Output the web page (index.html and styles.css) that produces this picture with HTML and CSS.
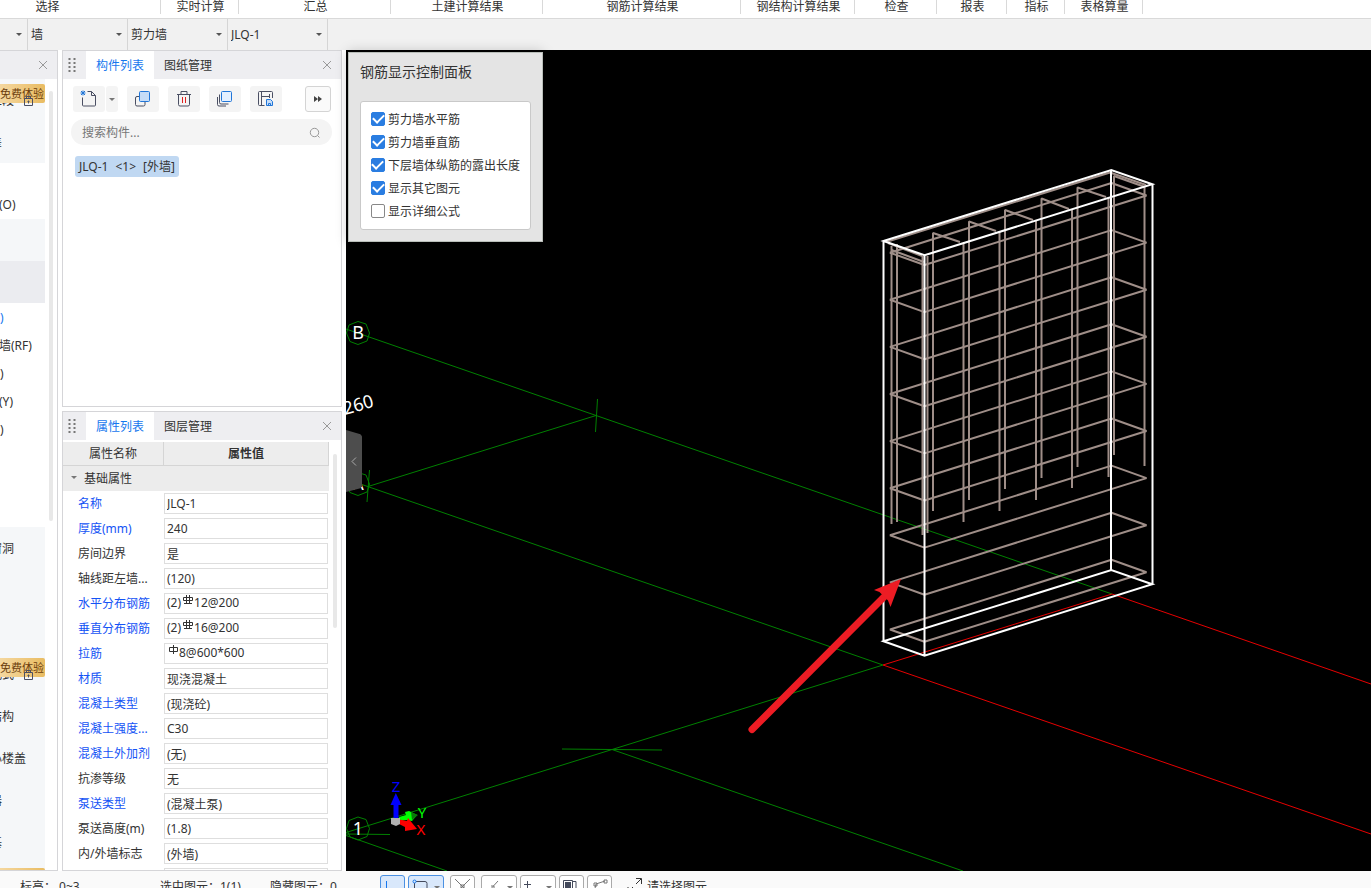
FILE: index.html
```html
<!DOCTYPE html>
<html lang="zh-CN">
<head>
<meta charset="utf-8">
<title>钢筋三维</title>
<link rel="stylesheet" href="styles.css">
</head>
<body>
<div class="app">
  <header class="ribbon">
    <span class="rg g1">选择</span><span class="rg g2">实时计算</span><span class="rg g3">汇总</span><span class="rg g4">土建计算结果</span><span class="rg g5">钢筋计算结果</span><span class="rg g6">钢结构计算结果</span><span class="rg g7">检查</span><span class="rg g8">报表</span><span class="rg g9">指标</span><span class="rg g10">表格算量</span>
  </header>
  <div class="pickers">
    <div class="picker short"><select aria-label="楼层"><option></option></select></div>
    <div class="picker"><select aria-label="构件大类"><option>墙</option></select></div>
    <div class="picker"><select aria-label="构件类型"><option>剪力墙</option></select></div>
    <div class="picker"><select aria-label="构件"><option>JLQ-1</option></select></div>
  </div>
  <main class="main">
    <aside class="nav">
      <div class="bar nav-bar">
        <button class="close" aria-label="关闭导航"><svg width="10" height="10" viewBox="0 0 10 10"><path d="M1 1l8 8M9 1l-8 8"/></svg></button>
      </div>
      <div class="nav-body">
        <div class="nav-list">
          <div class="shade">
            <a href="#" class="item">施工段<svg class="lock" width="11" height="12" viewBox="0 0 11 12"><path d="M1.500 3.500h8v7h-8zM3.500 3.500v-2h4v2M5.500 5.500v3M4.500 6.500h2"/></svg><span class="badge">免费体验</span></a>
            <a href="#" class="item">轴差</a>
          </div>
          <div class="open first"><a href="#" class="sub">辅轴(O)</a></div>
          <a href="#" class="item shade" aria-label="柱"></a>
          <a href="#" class="item active" aria-label="墙体"></a>
          <div class="open rest">
            <a href="#" class="sub on">墙(Q)</a>
            <a href="#" class="sub">女儿墙(RF)</a>
            <a href="#" class="sub">墙(Q)</a>
            <a href="#" class="sub">幕墙(Y)</a>
            <a href="#" class="sub">墙(Q)</a>
          </div>
          <div class="shade">
            <a href="#" class="item">门窗洞</a>
            <a href="#" class="item" aria-label="梁"></a>
            <a href="#" class="item" aria-label="板"></a>
            <a href="#" class="item">装配式<svg class="lock" width="11" height="12" viewBox="0 0 11 12"><path d="M1.500 3.500h8v7h-8zM3.500 3.500v-2h4v2M5.500 5.500v3M4.500 6.500h2"/></svg><span class="badge">免费体验</span></a>
            <a href="#" class="item">钢结构</a>
            <a href="#" class="item">空心楼盖</a>
            <a href="#" class="item">楼器</a>
            <a href="#" class="item">装基</a>
            <a href="#" class="item"><span class="badge">免费体验</span></a>
          </div>
        </div>
        <div class="track"><div class="thumb nav-thumb"></div></div>
      </div>
    </aside>

    <div class="docks">
      <section class="panel list-panel">
        <div class="bar">
          <svg class="grip" width="8" height="15" viewBox="0 0 8 15"><path d="M1.500 0v15M6.500 0v15"/></svg>
          <button class="tab on">构件列表</button><button class="tab">图纸管理</button>
          <button class="close" aria-label="关闭构件列表"><svg width="10" height="10" viewBox="0 0 10 10"><path d="M1 1l8 8M9 1l-8 8"/></svg></button>
        </div>
        <div class="tools">
          <div class="split">
            <button class="tool" aria-label="新建"><svg width="18" height="18" viewBox="0 0 18 18"><path class="ink" d="M7.500 1.500h4l4 4V15a1 1 0 0 1-1 1h-11a1 1 0 0 1-1-1V7.500M11.500 1.500v4h4"/><path class="blue fine" d="M1 1l4 4M5 1l-4 4M3 .500v5M.500 3h5"/></svg></button>
            <button class="tool drop" aria-label="新建选项"><i class="tri"></i></button>
          </div>
          <button class="tool" aria-label="复制"><svg width="18" height="18" viewBox="0 0 18 18"><path class="ink" d="M5 6.500H3A1.500 1.500 0 0 0 1.500 8v6.500A1.500 1.500 0 0 0 3 16h6.500a1.500 1.500 0 0 0 1.500-1.500V12"/><rect class="blue tint" x="5.500" y="1.500" width="10" height="10" rx="1"/></svg></button>
          <button class="tool" aria-label="删除"><svg width="18" height="18" viewBox="0 0 18 18"><path class="ink" d="M2 4.500h14M6 4V1.500h6V4M3.500 5v9.500A1.500 1.500 0 0 0 5 16h8a1.500 1.500 0 0 0 1.500-1.500V5"/><path class="red" d="M7.500 7v6M10.500 7v6"/></svg></button>
          <button class="tool" aria-label="层间复制"><svg width="18" height="18" viewBox="0 0 18 18"><path class="ink" d="M3.500 4.500v8A1.500 1.500 0 0 0 5 14h7.500M1.500 7v7.500A1.500 1.500 0 0 0 3 16h7"/><rect class="blue tint pale" x="5.500" y="1.500" width="10" height="10" rx="1"/></svg></button>
          <button class="tool" aria-label="存档"><svg width="18" height="18" viewBox="0 0 18 18"><path class="ink" d="M15.500 8V2.500a1 1 0 0 0-1-1h-12a1 1 0 0 0-1 1v12a1 1 0 0 0 1 1h5M4.500 1.500v14M4.500 6.500h8M12.500 4v4"/><path class="blue tint" d="M9.500 9.500h4l2 2v4h-6zM11.500 15.500v-2h2v2"/></svg></button>
          <button class="tool more" aria-label="更多"><svg width="8" height="6" viewBox="0 0 8 6"><path d="M0 0l4 3-4 3zM4 0l4 3-4 3z"/></svg></button>
        </div>
        <div class="search">
          <input type="text" placeholder="搜索构件..." aria-label="搜索构件">
          <svg width="12" height="12" viewBox="0 0 12 12"><circle cx="5.500" cy="5.500" r="4.200"/><path d="M8.500 8.500L10.500 10.500"/></svg>
        </div>
        <button class="entry"><span>JLQ-1</span><span>&lt;1&gt;</span><span>[外墙]</span></button>
      </section>

      <section class="panel prop-panel">
        <div class="bar">
          <svg class="grip" width="8" height="15" viewBox="0 0 8 15"><path d="M1.500 0v15M6.500 0v15"/></svg>
          <button class="tab on">属性列表</button><button class="tab">图层管理</button>
          <button class="close" aria-label="关闭属性列表"><svg width="10" height="10" viewBox="0 0 10 10"><path d="M1 1l8 8M9 1l-8 8"/></svg></button>
        </div>
        <div class="prop-body">
          <table class="props">
            <colgroup><col class="c-name"><col></colgroup>
            <thead><tr><th class="plain">属性名称</th><th>属性值</th></tr></thead>
            <tbody>
              <tr class="group"><td colspan="2"><i class="tri"></i>基础属性</td></tr>
              <tr><td><label class="key" for="p1">名称</label></td><td><div class="field"><input id="p1" value="JLQ-1"></div></td></tr>
              <tr><td><label class="key" for="p2">厚度(mm)</label></td><td><div class="field"><input id="p2" value="240"></div></td></tr>
              <tr><td><label for="p3">房间边界</label></td><td><div class="field"><input id="p3" value="是"></div></td></tr>
              <tr><td><label for="p4">轴线距左墙...</label></td><td><div class="field"><input id="p4" value="(120)"></div></td></tr>
              <tr><td><label class="key" for="p5">水平分布钢筋</label></td><td><div class="field bars"><span>(2)</span><svg width="13" height="12" viewBox="0 0 13 12"><path d="M2.500 3.500h9v3h-9zM5.500 1v8M8.500 1v8M3 9.500h8"/></svg><input id="p5" value="12@200"></div></td></tr>
              <tr><td><label class="key" for="p6">垂直分布钢筋</label></td><td><div class="field bars"><span>(2)</span><svg width="13" height="12" viewBox="0 0 13 12"><path d="M2.500 3.500h9v3h-9zM5.500 1v8M8.500 1v8M3 9.500h8"/></svg><input id="p6" value="16@200"></div></td></tr>
              <tr><td><label class="key" for="p7">拉筋</label></td><td><div class="field bars"><svg width="12" height="12" viewBox="0 0 12 12"><path d="M2.500 3.500h8v4h-8zM6.500 1v9"/></svg><input id="p7" value="8@600*600"></div></td></tr>
              <tr><td><label class="key" for="p8">材质</label></td><td><div class="field"><input id="p8" value="现浇混凝土"></div></td></tr>
              <tr><td><label class="key" for="p9">混凝土类型</label></td><td><div class="field"><input id="p9" value="(现浇砼)"></div></td></tr>
              <tr><td><label class="key" for="p10">混凝土强度...</label></td><td><div class="field"><input id="p10" value="C30"></div></td></tr>
              <tr><td><label class="key" for="p11">混凝土外加剂</label></td><td><div class="field"><input id="p11" value="(无)"></div></td></tr>
              <tr><td><label for="p12">抗渗等级</label></td><td><div class="field"><input id="p12" value="无"></div></td></tr>
              <tr><td><label class="key" for="p13">泵送类型</label></td><td><div class="field"><input id="p13" value="(混凝土泵)"></div></td></tr>
              <tr><td><label for="p14">泵送高度(m)</label></td><td><div class="field"><input id="p14" value="(1.8)"></div></td></tr>
              <tr><td><label for="p15">内/外墙标志</label></td><td><div class="field"><input id="p15" value="(外墙)"></div></td></tr>
              <tr><td></td><td><div class="field"><input aria-label="属性值" value=""></div></td></tr>
            </tbody>
          </table>
          <div class="track"><div class="thumb prop-thumb"></div></div>
        </div>
      </section>
    </div>

    <section class="view">
      <svg class="scene" viewBox="346 50 1025 821" preserveAspectRatio="xMinYMin slice">
        <defs>
          <path id="ring" d="M890 252.700L924.500 265L1146.500 195.500L1111.500 183Z"/>
          <path id="bubble" d="M0-11.500L8-9L11.500 0L9 8L0 11.500L-8 8.500L-11.500 0L-9-8Z"/>
        </defs>
        <g class="axis">
          <path d="M346 329L1112 594M368 486.500L596 415.500M346 479L883 665M346 832.500L883 665M612 749.500L963 871M346 835.500L447 871"/>
          <path d="M597.500 399L595.500 432M369.500 470L367 502M562 749L662 750M346 834L390 834.500"/>
          <use href="#bubble" x="358" y="333"/><use href="#bubble" x="358" y="484"/><use href="#bubble" x="358" y="828.500"/>
        </g>
        <path class="base" d="M883 665L1112 594L1371 684M883 665L1371 834"/>
        <g class="rebar">
          <use href="#ring"/><use href="#ring" y="47.100"/><use href="#ring" y="94.200"/><use href="#ring" y="141.300"/><use href="#ring" y="188.400"/><use href="#ring" y="235.500"/><use href="#ring" y="282.600"/><use href="#ring" y="329.700"/><use href="#ring" y="376.800"/>
          <path d="M891.500 246V524M897 244V522M922.500 256V535M927.500 256V533M933 511V233L960 242M963.500 243V522M969 500V221.500L996 231M999.500 231V511M1005 489V210L1033 220M1036 220V500M1041.500 478V198.500L1069 209M1072 209V488M1077.500 467V187.500L1106 197M1108.500 197V477M1114 455V176L1145 187M1144.500 187V466"/>
          <path d="M886 242L1110 172.500L1146 185M888 243L922 256M891.500 250L924 262"/>
        </g>
        <path class="wall" d="M883.500 241L1111.300 170L1152.300 184.300L924.500 255.300ZM883.500 641.300L1111.300 570L1152.300 584.300L924.500 655.700ZM883.500 241V641.300M1111 170V570M1152.500 184V584M924.500 255V655.700"/>
        <g class="arrow"><path class="shaft" d="M752 729.500L884 597"/><path d="M901 579L874 590L879.500 592L888 600.500L890.500 607Z"/></g>
        <g class="note">
          <text x="358" y="339" text-anchor="middle">B</text>
          <text x="358" y="490" text-anchor="middle">A</text>
          <text x="358" y="835" text-anchor="middle">1</text>
          <text transform="translate(345 415) rotate(-16)">260</text>
        </g>
        <g class="gizmo">
          <path class="z" d="M393.500 819V805H390.500L395.800 793L401.500 805H398.500V819Z"/>
          <path class="y" d="M399 817L406 815L405 812L409 811L417 815L412 821L406 820L399 821Z"/>
          <path class="yd" d="M411 812L418 815L412 820Z"/>
          <path class="x" d="M397 819L407 821L408 818L417 829L405 831L405 827L397 823Z"/>
          <path class="o" d="M391 818H400V824L396 826L391 824Z"/>
          <text class="z" x="396" y="792" text-anchor="middle">Z</text>
          <text class="y" x="422" y="818" text-anchor="middle">Y</text>
          <text class="x" x="421" y="835" text-anchor="middle">X</text>
        </g>
      </svg>
      <button class="fold" aria-label="收起"><svg width="6" height="9" viewBox="0 0 6 9"><path d="M5 .500L1 4.500L5 8.500"/></svg></button>
      <div class="dialog">
        <h2>钢筋显示控制面板</h2>
        <div class="checks">
          <label><input type="checkbox" checked>剪力墙水平筋</label>
          <label><input type="checkbox" checked>剪力墙垂直筋</label>
          <label><input type="checkbox" checked>下层墙体纵筋的露出长度</label>
          <label><input type="checkbox" checked>显示其它图元</label>
          <label><input type="checkbox">显示详细公式</label>
        </div>
      </div>
    </section>
  </main>
  <footer class="status">
    <span class="s1">标高： 0~3</span><span class="s2">选中图元：1(1)</span><span class="s3">隐藏图元：0</span>
    <div class="modes">
      <button class="mode on" aria-label="正交"><svg width="24" height="22" viewBox="0 0 24 22"><path d="M5.500 5v10h10"/></svg></button>
      <button class="mode wide on" aria-label="矩形"><svg width="24" height="22" viewBox="0 0 24 22"><path class="dark" d="M7 5.500h9a2 2 0 0 1 2 2V18M5.500 7v11"/><circle cx="5.500" cy="5.500" r="1.500"/></svg><i class="tri"></i></button>
      <button class="mode gap" aria-label="交点"><svg width="24" height="22" viewBox="0 0 24 22"><path d="M4 3l15 15M19 3L4 18"/><path d="M10 9h3v3h-3z"/></svg></button>
      <button class="mode wide gap" aria-label="垂点"><svg width="24" height="22" viewBox="0 0 24 22"><path d="M16 5L6 16M9 10h3v3"/></svg><i class="tri"></i></button>
      <button class="mode wide" aria-label="中点"><svg width="24" height="22" viewBox="0 0 24 22"><path class="dark" d="M6.500 5v7M3 8.500h7"/></svg><i class="tri"></i></button>
      <button class="mode" aria-label="顶点"><svg width="24" height="22" viewBox="0 0 24 22"><path class="dark" d="M3.500 4.500h9v14h-9zM13 5.500h3v11"/><path class="solid" d="M5 6h6v9H5z"/></svg></button>
      <button class="mode" aria-label="多边形"><svg width="24" height="22" viewBox="0 0 24 22"><path d="M6 17L8 8L17 5M16 4h3v3h-3zM6 7h3v3H6z"/></svg></button>
    </div>
    <svg class="hint" width="16" height="16" viewBox="0 0 16 16"><path d="M9 1.500h5.500V7M14 2L9 7M6 10L1.500 14.500M1 10v5h5"/></svg>
    <span>请选择图元</span>
  </footer>
</div>
</body>
</html>
```

FILE: styles.css
```css
* { box-sizing: border-box; }
body { margin: 0; background: #fff; color: #333; font: 12px/16px "Noto Sans", "Noto Sans CJK SC", sans-serif; }
button, input, select { font: inherit; color: inherit; margin: 0; padding: 0; border: 0; background: none; }
a { color: inherit; text-decoration: none; }
svg { display: block; fill: none; flex: none; }
.app { display: flex; flex-direction: column; height: 100vh; overflow: hidden; }

.ribbon { display: flex; flex: none; height: 19px; border-bottom: 1px solid #d9d9d9; overflow: hidden; }
.rg { flex: none; height: 14px; line-height: 14px; padding-left: 2px; border-right: 1px solid #d9d9d9; text-align: center; white-space: nowrap; }
.g1 { width: 161px; padding-right: 67px; }
.g2 { width: 78px; }
.g3 { width: 152px; }
.g4 { width: 152px; }
.g5 { width: 198px; }
.g6 { width: 114px; }
.g7 { width: 82px; }
.g8 { width: 70px; }
.g9 { width: 58px; }
.g10 { width: 78px; }

.pickers { display: flex; flex: none; height: 31px; background: #f1f1f1; }
.picker { position: relative; width: 100px; border-right: 1px solid #d5d5d5; }
.picker.short { width: 28px; }
.picker select { appearance: none; width: 100%; height: 31px; padding-left: 3px; outline: 0; }
.picker::after { content: ""; position: absolute; right: 5px; top: 14px; border: 3px solid transparent; border-top-color: #555; border-bottom: 0; pointer-events: none; }
.tri { display: block; border: 3px solid transparent; border-top-color: #777; border-bottom: 0; }

.main { display: flex; flex: 1; min-height: 0; }
.bar { display: flex; align-items: center; flex: none; height: 28px; background: #eeeef1; }
.grip { margin: 0 10px 0 5px; }
.grip path { stroke: #777; stroke-width: 2; stroke-dasharray: 2 2; }
.tab { height: 28px; width: 68px; padding-top: 2px; }
.tab.on { background: #fff; color: #1677ee; }
.close { width: 20px; height: 20px; margin-left: auto; margin-right: 4px; display: grid; place-items: center; }
.close path { stroke: #999; }

.nav { width: 58px; flex: none; display: flex; flex-direction: column; border: solid #d5d5d8; border-width: 1px 1px 1px 0; }
.nav-body { display: flex; flex: 1; min-height: 0; overflow: hidden; }
.nav-list { width: 45px; overflow: hidden; }
.shade { background: #f5f7f9; }
.item { display: block; position: relative; height: 42px; line-height: 44px; text-indent: -22px; white-space: nowrap; }
.item.active { background: #ebecf0; }
.open .sub { display: block; height: 28px; line-height: 28px; text-indent: -25px; white-space: nowrap; }
.open .sub.on { color: #1677ee; }
.open.first { padding: 28px 0 0; }
.open.rest { padding: 1px 0 83px; }
.badge { position: absolute; left: 0; right: 0; top: 5px; height: 19px; line-height: 19px; font-size: 11px; text-indent: 0; color: #6b3d0c; background: linear-gradient(90deg, #f4d79f, #e9bc62); border-radius: 0 2px 2px 0; }
.lock { position: absolute; left: 23px; top: 16px; z-index: 1; stroke: #4a4f63; }
.track { flex: none; width: 4px; margin: 0 4px; }
.thumb { background: #e8e8e8; border-radius: 2px; }
.nav-thumb { height: 430px; margin-top: 12px; }

.docks { display: flex; flex-direction: column; flex: none; width: 280px; margin: 0 4px; }
.panel { border: 1px solid #d5d5d8; display: flex; flex-direction: column; min-height: 0; }
.list-panel { flex: 357 0 0; margin-bottom: 4px; }
.prop-panel { flex: 460 0 0; }
.tools { display: flex; gap: 9px; padding: 7px 10px; }
.split { display: flex; gap: 1px; }
.tool { width: 32px; height: 26px; display: grid; place-items: center; background: #f4f4f4; border-radius: 3px; }
.tool.drop { width: 12px; }
.tool.more { width: 26px; margin-left: auto; border: 1px solid #d4d4d4; background: #fafafa; }
.tool.more path { fill: #444; }
.ink { stroke: #4a4f63; }
.blue { stroke: #2176d8; }
.fine { stroke-width: 1; }
.tint { fill: #c5dcf7; }
.tint.pale { fill: #e4f0ff; }
.red { stroke: #e02020; }
.search { display: flex; align-items: center; height: 26px; margin: 0 9px 0 8px; padding: 1px 11px 0; border-radius: 13px; background: #f4f4f4; }
.search input { flex: 1; min-width: 0; outline: 0; }
.search input::placeholder { color: #777; opacity: 1; }
.search svg { stroke: #999; stroke-width: 1; }
.entry { display: flex; gap: 7px; align-items: center; align-self: flex-start; margin: 11px 0 0 12px; padding: 0 4px; height: 21px; border-radius: 3px; background: #c0d8f2; white-space: nowrap; }

.prop-body { display: flex; flex: 1; min-height: 0; overflow: hidden; padding-top: 2px; }
.props { flex: 1; align-self: flex-start; border-collapse: separate; border-spacing: 0; table-layout: fixed; width: 100%; }
.c-name { width: 101px; }
.props th { height: 24px; padding: 1px 0 0; background: #ededed; border: solid #d5d5d5; border-width: 0 1px 1px 0; }
.props th.plain { font-weight: 400; }
.props td { height: 25px; padding: 2px 1px 2px 0; white-space: nowrap; }
.props td:first-child { padding-left: 15px; }
.props .group td { background: #ececec; padding: 0 0 0 21px; position: relative; }
.group .tri { position: absolute; left: 8px; top: 10px; }
.key { color: #1453f5; }
.field { display: flex; align-items: center; height: 21px; padding-left: 2px; border: 1px solid #dedede; background: #fff; }
.field input { flex: 1; min-width: 0; height: 19px; outline: 0; }
.field.bars { align-items: flex-start; }
.bars span, .field.bars input { height: 17px; line-height: 17px; }
.bars svg { stroke: #333; }
.prop-thumb { height: 174px; margin-top: 12px; }

.view { position: relative; flex: 1; min-width: 0; background: #000; }
.scene { position: absolute; inset: 0; width: 100%; height: 100%; }
.axis { stroke: #008000; }
.base { stroke: #e60000; }
.rebar { stroke: #9f8e88; stroke-width: 2; stroke-linejoin: bevel; }
.wall { stroke: #fff; stroke-width: 2; }
.arrow { fill: #ed1c24; }
.shaft { stroke: #ed1c24; stroke-width: 7; stroke-linecap: round; }
.note { fill: #fff; font-size: 18px; }
.gizmo { font-size: 15px; }
.z { fill: #00f; }
.y { fill: #0f0; }
.yd { fill: #087a08; }
.x { fill: #f00; }
.o { fill: #b0b0b0; }
.fold { position: absolute; left: 0; top: 380px; width: 16px; height: 62px; padding-left: 5px; background: #4d4d4d; clip-path: polygon(0 0, 90% 7%, 100% 10%, 100% 91%, 90% 94%, 0 100%); }
.fold path { stroke: #aaa; }
.dialog { position: absolute; left: 2px; top: 2px; width: 195px; padding: 10px 11px 11px; background: #e4e4e4; border: 1px solid #b9beb9; box-shadow: 0 0 12px rgba(0, 0, 0, .22); }
.dialog h2 { margin: 0 0 20px; font-size: 14px; line-height: 18px; font-weight: 400; }
.checks { padding: 6px 10px; background: #fff; border: 1px solid #c9c9c9; border-radius: 3px; }
.checks label { display: flex; align-items: center; gap: 3px; height: 23px; white-space: nowrap; }
.checks input { appearance: none; display: grid; place-items: center; width: 14px; height: 14px; margin: 0 0 1px; border: 1px solid #888; border-radius: 2px; background: #fff; }
.checks input:checked { background: #2a7de1; border-color: #2a7de1; }
.checks input:checked::after { content: ""; width: 9px; height: 5px; margin-bottom: 3px; border: solid #fff; border-width: 0 0 2px 2px; transform: rotate(-45deg); }

.status { display: flex; flex: none; height: 17px; padding: 4px 0 0 20px; overflow: hidden; background: #fafafa; line-height: 24px; white-space: nowrap; }
.s1 { width: 140px; }
.s2 { width: 110px; }
.s3 { width: 110px; }
.modes { display: flex; gap: 3px; }
.mode { display: flex; align-items: center; width: 25px; height: 24px; border: 1px solid #aaa; border-radius: 3px; background: #fff; }
.mode.wide { width: 36px; }
.mode.gap { margin-left: 3px; }
.mode svg { stroke: #777; }
.mode .dark { stroke: #444a5c; }
.mode .solid { fill: #444a5c; stroke: none; }
.mode.on { background: #d9e8fb; border-color: #4a90e2; }
.mode.on svg { stroke: #1677ee; }
.mode .tri { margin-left: 1px; }
.hint { margin: 2px 4px 0 15px; stroke: #333; }
```
